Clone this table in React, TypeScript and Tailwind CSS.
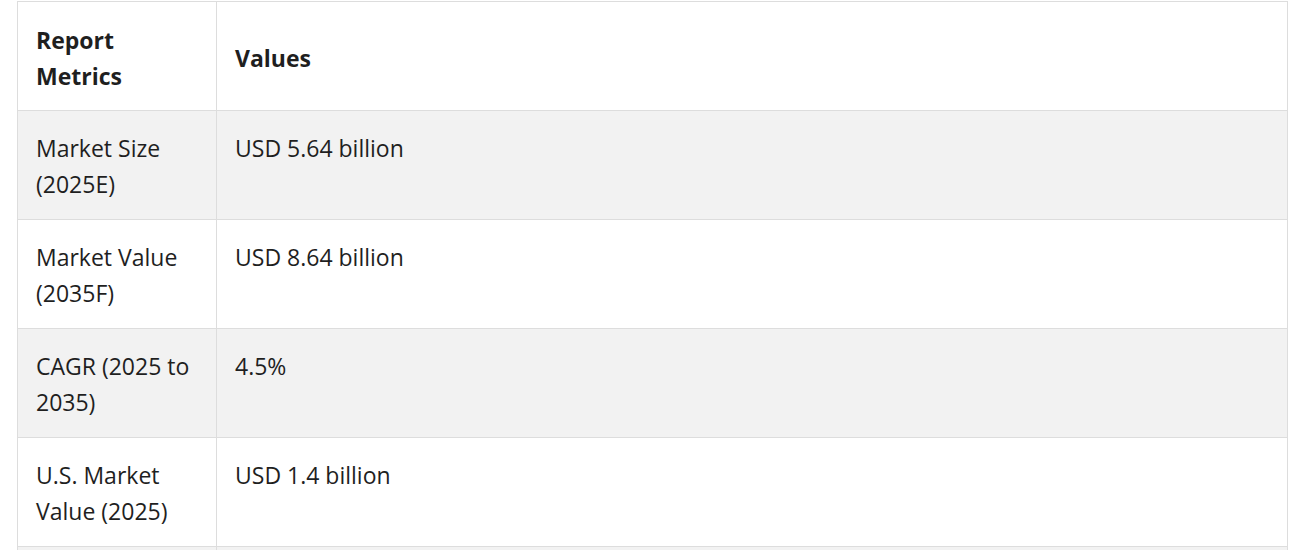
import React from "react";

const rows: [string, string][] = [
  ["Market Size (2025E)", "USD 5.64 billion"],
  ["Market Value (2035F)", "USD 8.64 billion"],
  ["CAGR (2025 to 2035)", "4.5%"],
  ["U.S. Market Value (2025)", "USD 1.4 billion"],
  ["", ""],
];

export default function App() {
  return (
    <div className="w-[1308px] h-[550px] overflow-hidden bg-white pt-px pl-[17px]">
      <table
        className="w-[1271px] table-fixed border-collapse text-[23px] leading-[36px] text-[#1f1f1f]"
        style={{ fontFamily: '"Open Sans", "Noto Sans", sans-serif' }}
      >
        <thead>
          <tr className="h-[109px]">
            <th className="w-[199px] border border-[#dddddd] px-[18px] pt-[20px] pb-[16px] text-left font-bold align-middle">
              Report Metrics
            </th>
            <th className="border border-[#dddddd] px-[18px] pt-[20px] pb-[16px] text-left font-bold align-middle">
              Values
            </th>
          </tr>
        </thead>
        <tbody>
          {rows.map(([a, b], i) => (
            <tr key={i} className={i % 2 === 0 ? "h-[109px] bg-[#f2f2f2]" : "h-[109px] bg-white"}>
              <td className="border border-[#dddddd] px-[18px] pt-[19px] pb-[17px] align-top">{a}</td>
              <td className="border border-[#dddddd] px-[18px] pt-[19px] pb-[17px] align-top">{b}</td>
            </tr>
          ))}
        </tbody>
      </table>
    </div>
  );
}
